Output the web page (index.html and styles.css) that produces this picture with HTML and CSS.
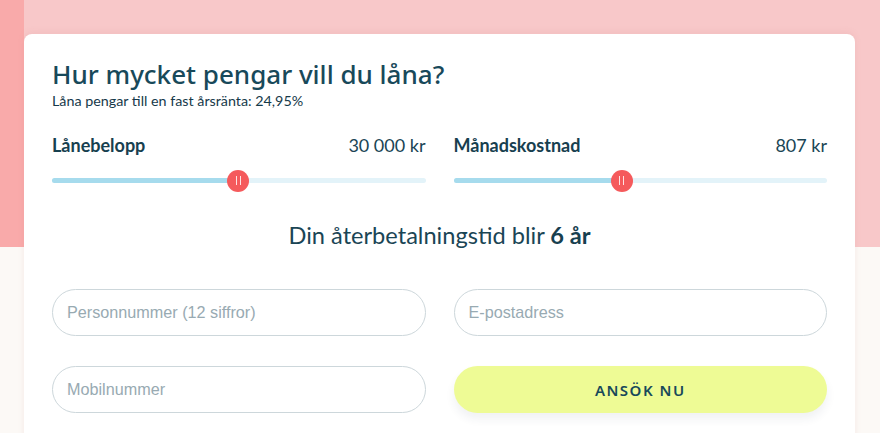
FILE: index.html
```html
<!DOCTYPE html>
<html lang="sv">
<head>
<meta charset="utf-8">
<title>Låna pengar</title>
<link rel="stylesheet" href="styles.css">
</head>
<body>
<main class="card">
  <h1 class="title">Hur mycket pengar vill du låna?</h1>
  <p class="subtitle">Låna pengar till en fast årsränta: 24,95%</p>

  <div class="sliders">
    <div class="slider-block">
      <div class="slider-head">
        <span class="slider-label">Lånebelopp</span>
        <span class="slider-value">30 000 kr</span>
      </div>
      <div class="track">
        <div class="fill" style="width: 49.9%"></div>
        <div class="thumb" style="left: 49.9%"><span class="grip"></span><span class="grip"></span></div>
      </div>
    </div>
    <div class="slider-block">
      <div class="slider-head">
        <span class="slider-label">Månadskostnad</span>
        <span class="slider-value">807 kr</span>
      </div>
      <div class="track">
        <div class="fill" style="width: 45%"></div>
        <div class="thumb" style="left: 45%"><span class="grip"></span><span class="grip"></span></div>
      </div>
    </div>
  </div>

  <p class="result">Din återbetalningstid blir <strong>6 år</strong></p>

  <form class="form">
    <input class="field" type="text" placeholder="Personnummer (12 siffror)">
    <input class="field" type="email" placeholder="E-postadress">
    <input class="field" type="tel" placeholder="Mobilnummer">
    <button class="apply" type="button">ANSÖK NU</button>
  </form>
</main>
</body>
</html>
```

FILE: styles.css
```css
html, body {
  margin: 0;
  padding: 0;
}
body {
  width: 880px;
  height: 433px;
  overflow: hidden;
  background:
    linear-gradient(to right, #f9aaaa 0, #f9aaaa 24px, rgba(0,0,0,0) 24px) top left / 100% 247px no-repeat,
    linear-gradient(to bottom, #f8c8c9 0, #f8c8c9 247px, #fcf9f6 247px);
  font-family: Lato, "Noto Sans", sans-serif;
  color: #1a4555;
}
.card {
  margin: 34px 25px 0 24px;
  background: #ffffff;
  border-radius: 8px;
  padding: 24px 28px 40px;
  box-shadow: 0 -2px 6px rgba(200, 120, 120, 0.12);
}
.title {
  margin: 0;
  font-family: "Noto Sans", sans-serif;
  font-weight: 500;
  font-size: 26px;
  line-height: 32px;
  color: #18495a;
}
.subtitle {
  margin: 2px 0 0;
  font-size: 14.3px;
  line-height: 18px;
  color: #16394a;
}
.sliders {
  display: grid;
  grid-template-columns: 1fr 1fr;
  column-gap: 28px;
  margin-top: 24px;
}
.slider-head {
  display: flex;
  justify-content: space-between;
  align-items: baseline;
  font-size: 18px;
  line-height: 22px;
}
.slider-label {
  font-weight: 700;
  color: #17404f;
}
.slider-value {
  color: #1a4555;
}
.track {
  position: relative;
  height: 5px;
  margin-top: 22px;
  border-radius: 3px;
  background: #e3f3f9;
}
.fill {
  height: 100%;
  border-radius: 3px;
  background: #a6dbed;
}
.thumb {
  position: absolute;
  top: 50%;
  width: 22px;
  height: 22px;
  margin: -11px 0 0 -11px;
  border-radius: 50%;
  background: #f55a5c;
  display: flex;
  justify-content: center;
  align-items: center;
  gap: 3px;
}
.grip {
  width: 1px;
  height: 9px;
  background: #ffe3e3;
}
.result {
  margin: 38px 0 0;
  text-align: center;
  font-size: 23.6px;
  line-height: 28px;
  color: #1a4555;
}
.result strong {
  font-weight: 700;
  color: #17404f;
}
.form {
  display: grid;
  grid-template-columns: 1fr 1fr;
  column-gap: 28px;
  row-gap: 30px;
  margin-top: 40px;
}
.field {
  box-sizing: border-box;
  height: 47px;
  border: 1px solid #cdd7db;
  border-radius: 24px;
  padding: 0 14px;
  font-family: "Liberation Sans", Arial, sans-serif;
  font-size: 16.2px;
  color: #1a4555;
  background: #fff;
  outline: none;
}
.field::placeholder {
  color: #98aab2;
}
.apply {
  height: 47px;
  border: 0;
  border-radius: 24px;
  background: #eefb95;
  font-family: "Noto Sans", sans-serif;
  font-weight: 600;
  font-size: 15px;
  letter-spacing: 1.5px;
  color: #18495a;
  box-shadow: 0 6px 10px rgba(40, 60, 80, 0.07);
  cursor: pointer;
}
```
